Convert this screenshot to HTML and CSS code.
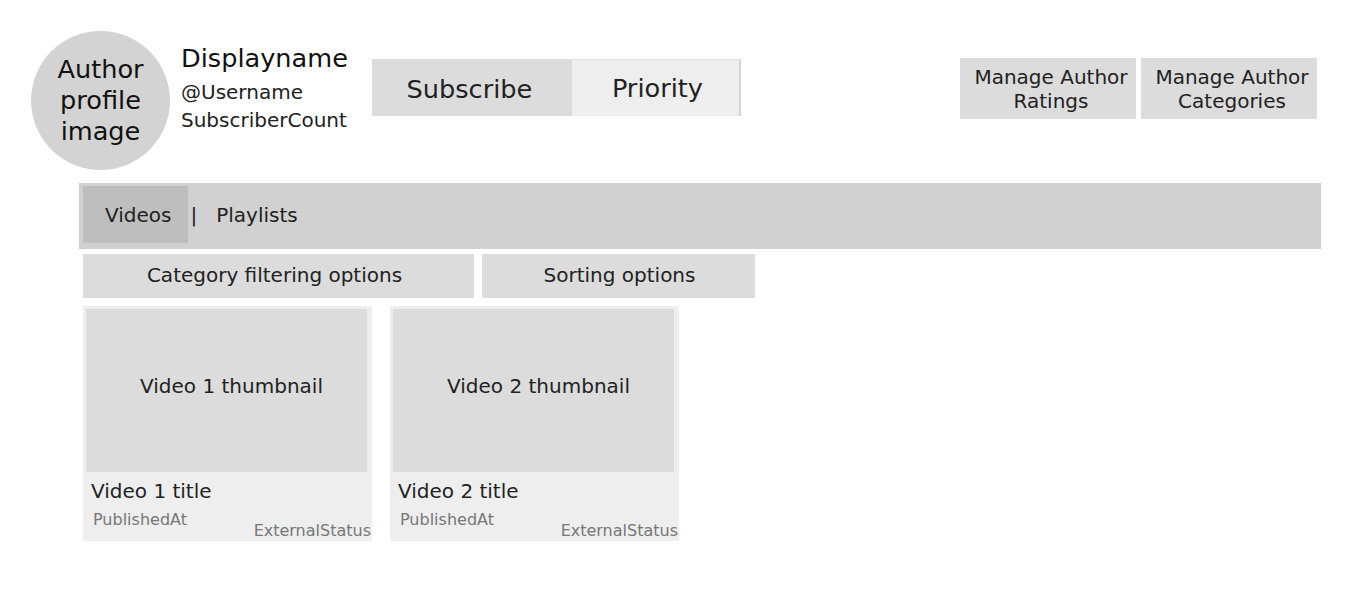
FILE: index.html
```html
<!DOCTYPE html>
<html lang="en">
<head>
  <meta charset="UTF-8" />
  <title>Author page</title>
  <link rel="stylesheet" href="styles.css">
</head>
<body>
  <div class="author-header">
    <div class="author-avatar">Author profile image</div>
    <div class="author-names">
      <div class="display-name">Displayname</div>
      <div class="sub-line">@Username</div>
      <div class="sub-line">SubscriberCount</div>
    </div>
    <div class="subscribe-group">
      <div class="btn-subscribe">Subscribe</div>
      <div class="btn-priority">Priority</div>
    </div>
    <div class="manage-group">
      <div class="btn-manage">Manage Author<br>Ratings</div>
      <div class="btn-manage">Manage Author<br>Categories</div>
    </div>
  </div>

  <div class="tab-bar">
    <div class="tab active">Videos</div>
    <span class="tab-sep">|</span>
    <div class="tab">Playlists</div>
  </div>

  <div class="filter-row">
    <div class="filter-box filter-category">Category filtering options</div>
    <div class="filter-box filter-sort">Sorting options</div>
  </div>

  <div class="video-grid">
    <div class="video-card">
      <div class="thumb">Video 1 thumbnail</div>
      <div class="video-title">Video 1 title</div>
      <div class="video-meta">
        <span class="published">PublishedAt</span>
        <span class="ext-status">ExternalStatus</span>
      </div>
    </div>
    <div class="video-card">
      <div class="thumb">Video 2 thumbnail</div>
      <div class="video-title">Video 2 title</div>
      <div class="video-meta">
        <span class="published">PublishedAt</span>
        <span class="ext-status">ExternalStatus</span>
      </div>
    </div>
  </div>
</body>
</html>
```

FILE: styles.css
```css
body {
  margin: 0;
  font-family: "DejaVu Sans", sans-serif;
  color: #222;
  background: #fff;
}
.author-header {
  display: flex;
  align-items: flex-start;
  padding: 31px 33px 0 31px;
}
.author-avatar {
  width: 139px;
  height: 139px;
  border-radius: 50%;
  background: #d3d3d3;
  display: flex;
  align-items: center;
  justify-content: center;
  text-align: center;
  font-size: 25.6px;
  line-height: 31px;
  color: #111;
  padding: 0 18px;
  box-sizing: border-box;
}
.author-names {
  margin: 12px 0 0 11px;
}
.display-name {
  font-size: 25.6px;
  line-height: 30px;
  margin-bottom: 5px;
  color: #111;
}
.sub-line {
  font-size: 20px;
  line-height: 28px;
}
.subscribe-group {
  display: flex;
  margin: 28px 0 0 24px;
  height: 57px;
  font-size: 25.6px;
}
.btn-subscribe {
  background: #dcdcdc;
  width: 200px;
  display: flex;
  align-items: center;
  justify-content: center;
  padding: 3px 5px 0 0;
  box-sizing: border-box;
}
.btn-priority {
  background: #eeeeee;
  width: 169px;
  display: flex;
  align-items: center;
  justify-content: center;
  padding-left: 4px;
  border-top: 1px solid #e2e2e2;
  border-right: 2px solid #d6d6d6;
  box-sizing: border-box;
}
.manage-group {
  display: flex;
  gap: 5px;
  margin: 27px 0 0 auto;
}
.btn-manage {
  background: #dcdcdc;
  width: 176px;
  height: 61px;
  box-sizing: border-box;
  padding: 7px 0 0 6px;
  text-align: center;
  font-size: 20px;
  line-height: 24px;
}
.tab-bar {
  display: flex;
  align-items: center;
  margin: 13px 29px 0 79px;
  padding: 3px 4px 6px;
  background: #d1d1d1;
  font-size: 20px;
}
.tab {
  height: 57px;
  display: flex;
  align-items: center;
  padding: 0 17px 0 22px;
}
.tab.active {
  background: #bebebe;
}
.tab-sep {
  margin-left: 2px;
}
.tab-sep + .tab {
  padding-left: 19px;
}
.filter-row {
  display: flex;
  gap: 8px;
  margin: 5px 0 0 83px;
  font-size: 20px;
}
.filter-box {
  background: #dcdcdc;
  height: 44px;
  display: flex;
  align-items: center;
  justify-content: center;
  padding-bottom: 2px;
  box-sizing: border-box;
}
.filter-category {
  width: 391px;
  padding-right: 8px;
}
.filter-sort {
  width: 273px;
  padding-left: 2px;
}
.video-grid {
  display: flex;
  gap: 18px;
  margin: 8px 0 0 83px;
}
.video-card {
  width: 289px;
  height: 235px;
  background: #eeeeee;
  padding: 3px 5px 0 3px;
  box-sizing: border-box;
}
.thumb {
  height: 163px;
  background: #dcdcdc;
  display: flex;
  align-items: center;
  justify-content: center;
  padding: 0 0 9px 10px;
  box-sizing: border-box;
  font-size: 20px;
}
.video-title {
  font-size: 20px;
  line-height: 24px;
  margin: 7px 0 0 5px;
}
.video-meta {
  display: flex;
  justify-content: space-between;
  align-items: flex-start;
  margin-right: -4px;
  color: #777;
  font-size: 16px;
}
.published {
  margin: 7px 0 0 7px;
}
.ext-status {
  margin-top: 18px;
}
```
